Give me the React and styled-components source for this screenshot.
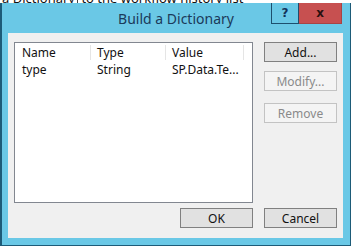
import React from "react";
import styled, { createGlobalStyle } from "styled-components";

const Global = createGlobalStyle`
  html, body { margin: 0; padding: 0; background: #ffffff; }
  body { width: 351px; height: 246px; overflow: hidden; font-family: "Noto Sans", "Open Sans", sans-serif; }
  #root { width: 351px; height: 246px; display: flex; flex-direction: column; }
`;

const Behind = styled.div`
  height: 3px;
  overflow: hidden;
  background: #fff;
  flex: none;
  display: flow-root;
`;

const BehindText = styled.div`
  margin-top: -9px;
  padding-left: 2px;
  font-size: 13px;
  line-height: 14px;
  color: #111;
  white-space: nowrap;
`;

const Under = styled.span`
  text-decoration: underline;
  border-right: 1px solid #444;
  padding-right: 2px;
`;

const Window = styled.div`
  flex: 1;
  display: flex;
  flex-direction: column;
  background: #6ac8e6;
  border: 1px solid #1d5b78;
  border-top: none;
  border-left-width: 2px;
  padding: 0 7px 7px 6px;
`;

const TitleBar = styled.div`
  height: 30px;
  display: flex;
  align-items: flex-start;
  margin: 0 -7px 0 -6px;
`;

const Title = styled.div`
  flex: 1;
  text-align: center;
  padding-left: 79px;
  font-size: 14px;
  line-height: 18px;
  margin-top: 7px;
  color: #1b3a5a;
  white-space: nowrap;
`;

const Caption = styled.div`
  flex: none;
  display: flex;
  margin-right: 8px;
`;

const CapBtn = styled.div`
  height: 21px;
  width: ${(p) => p.$w}px;
  box-sizing: border-box;
  display: flex;
  align-items: center;
  justify-content: center;
  background: ${(p) => (p.$close ? "#c75050" : "#6ac8e6")};
  border: 1px solid ${(p) => (p.$close ? "#a84444" : "#1d4f6e")};
  border-top: none;
  ${(p) => (p.$close ? "border-left: none;" : "")}
  font-family: "DejaVu Sans", sans-serif;
  font-weight: bold;
  font-size: 12px;
  color: ${(p) => (p.$close ? "#2a1010" : "#12325a")};
`;

const Client = styled.div`
  flex: 1;
  background: #f0f0f0;
  display: grid;
  grid-template-columns: 239px 73px;
  grid-template-rows: 161px 1fr;
  column-gap: 11px;
  padding: 9px 6px 0 6px;
`;

const List = styled.div`
  background: #fff;
  border: 1px solid #828790;
  box-sizing: border-box;
  font-size: 12px;
  color: #111;
`;

const Row = styled.div`
  display: grid;
  grid-template-columns: 76px 75px 78px;
  height: ${(p) => (p.$head ? 18 : 17)}px;
  align-items: center;
`;

const Cell = styled.div`
  padding-left: ${(p) => (p.$first ? 7 : 6)}px;
  height: ${(p) => (p.$head ? 15 : 17)}px;
  line-height: ${(p) => (p.$head ? 15 : 17)}px;
  border-right: ${(p) => (p.$head ? "1px solid #e5e5e5" : "none")};
  white-space: nowrap;
  overflow: hidden;
`;

const Side = styled.div`
  display: flex;
  flex-direction: column;
`;

const Btn = styled.div`
  height: 20px;
  width: 73px;
  box-sizing: border-box;
  margin-top: ${(p) => p.$mt || 0}px;
  display: flex;
  align-items: center;
  justify-content: center;
  font-size: 12px;
  background: ${(p) => (p.$disabled ? "#f4f4f4" : "#e1e1e1")};
  border: 1px solid ${(p) => (p.$disabled ? "#c3c3c3" : "#808080")};
  color: ${(p) => (p.$disabled ? "#8a8a8a" : "#111")};
`;

const Footer = styled.div`
  grid-column: 1 / 3;
  display: flex;
  justify-content: flex-end;
  gap: 11px;
  padding-top: 5px;
`;

export default function App() {
  return (
    <>
      <Global />
      <Behind>
        <BehindText>
          <Under>a Dictionary</Under> to the workflow history list
        </BehindText>
      </Behind>
      <Window>
        <TitleBar>
          <Title>Build a Dictionary</Title>
          <Caption>
            <CapBtn $w={28}>?</CapBtn>
            <CapBtn $w={43} $close>x</CapBtn>
          </Caption>
        </TitleBar>
        <Client>
          <List>
            <Row $head>
              <Cell $head $first>Name</Cell>
              <Cell $head>Type</Cell>
              <Cell $head>Value</Cell>
            </Row>
            <Row>
              <Cell $first>type</Cell>
              <Cell>String</Cell>
              <Cell>SP.Data.Te...</Cell>
            </Row>
          </List>
          <Side>
            <Btn>Add...</Btn>
            <Btn $mt={9} $disabled>Modify...</Btn>
            <Btn $mt={12} $disabled>Remove</Btn>
          </Side>
          <Footer>
            <Btn>OK</Btn>
            <Btn>Cancel</Btn>
          </Footer>
        </Client>
      </Window>
    </>
  );
}
